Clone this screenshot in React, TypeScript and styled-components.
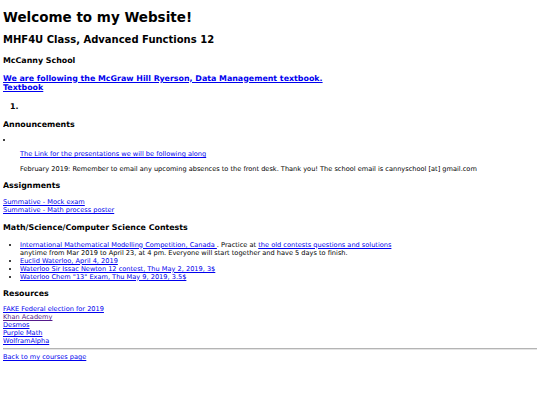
import React from "react";
import styled, { createGlobalStyle } from "styled-components";

const Global = createGlobalStyle`
  html, body { background: #fff; }
  body {
    margin: 3px;
    font-family: "DejaVu Sans", Verdana, sans-serif;
    color: #000;
    font-size: 6.6px;
    line-height: 8px;
  }
  a { color: #0000ee; }
`;

const Title = styled.h1`
  font-size: 13.5px;
  line-height: 16px;
  margin: 5.8px 0 0;
  font-weight: bold;
`;

const Subtitle = styled.h2`
  font-size: 10px;
  line-height: 12px;
  margin: 9px 0 0;
  font-weight: bold;
`;

const Heading = styled.h3<{ $top: number }>`
  font-size: 7.9px;
  line-height: 9px;
  margin: ${(p) => p.$top}px 0 0;
  font-weight: bold;
`;

const BookBlock = styled.div`
  margin-top: 9px;
  display: flex;
  flex-direction: column;
  align-items: flex-start;
`;

const BookLink = styled.a`
  font-size: 7.9px;
  line-height: 9.5px;
  font-weight: bold;
`;

const NumberList = styled.ol`
  margin: 9px 0 0;
  padding-left: 7px;
  list-style-position: inside;
  font-size: 7.9px;
  line-height: 9px;
  font-weight: bold;
`;

const BulletList = styled.ul`
  margin: 7px 0 0;
  padding-left: 0;
  list-style-position: inside;
  list-style-type: disc;
`;

const Indented = styled.div`
  padding-left: 17px;
`;

const Para = styled.p<{ $top: number }>`
  margin: ${(p) => p.$top}px 0 0;
`;

const LinkStack = styled.div<{ $top: number }>`
  display: flex;
  flex-direction: column;
  align-items: flex-start;
  margin-top: ${(p) => p.$top}px;
`;

const ContestList = styled.ul`
  margin: 8.4px 0 0;
  padding-left: 17px;
  list-style-type: disc;
`;

const Visited = styled.a`
  color: #551a8b;
`;

const Rule = styled.hr`
  margin: 2.8px 0 0;
  border: none;
  border-top: 1px solid #b4b4b4;
  border-bottom: 1px solid #e4e4e4;
`;

const Footer = styled.div`
  margin-top: 3.2px;
`;

export default function App() {
  return (
    <>
      <Global />
      <Title>Welcome to my Website!</Title>
      <Subtitle>MHF4U Class, Advanced Functions 12</Subtitle>
      <Heading $top={9.8}>McCanny School</Heading>
      <BookBlock>
        <BookLink href="#">We are following the McGraw Hill Ryerson, Data Management textbook.</BookLink>
        <BookLink href="#">Textbook</BookLink>
      </BookBlock>
      <NumberList>
        <li></li>
      </NumberList>
      <Heading $top={9}>Announcements</Heading>
      <BulletList>
        <li></li>
      </BulletList>
      <Indented>
        <Para $top={6.8}>
          <a href="#">The Link for the presentations we will be following along</a>
        </Para>
        <Para $top={6.2}>
          February 2019: Remember to email any upcoming absences to the front desk. Thank you! The school email is cannyschool [at] gmail.com
        </Para>
      </Indented>
      <Heading $top={8.9}>Assignments</Heading>
      <LinkStack $top={7.9}>
        <a href="#">Summative - Mock exam</a>
        <a href="#">Summative - Math process poster</a>
      </LinkStack>
      <Heading $top={8.8}>Math/Science/Computer Science Contests</Heading>
      <ContestList>
        <li>
          <a href="#">International Mathematical Modelling Competition, Canada </a> . Practice at{" "}
          <a href="#">the old contests questions and solutions</a>
          <br />
          anytime from Mar 2019 to April 23, at 4 pm. Everyone will start together and have 5 days to finish.
        </li>
        <li><a href="#">Euclid Waterloo, April 4, 2019</a></li>
        <li><a href="#">Waterloo Sir Issac Newton 12 contest, Thu May 2, 2019, 3$</a></li>
        <li><a href="#">Waterloo Chem "13" Exam, Thu May 9, 2019, 3.5$</a></li>
      </ContestList>
      <Heading $top={8.1}>Resources</Heading>
      <LinkStack $top={7.4}>
        <a href="#">FAKE Federal election for 2019</a>
        <Visited href="#">Khan Academy</Visited>
        <a href="#">Desmos</a>
        <a href="#">Purple Math</a>
        <a href="#">WolframAlpha</a>
      </LinkStack>
      <Rule />
      <Footer>
        <a href="#">Back to my courses page</a>
      </Footer>
    </>
  );
}
